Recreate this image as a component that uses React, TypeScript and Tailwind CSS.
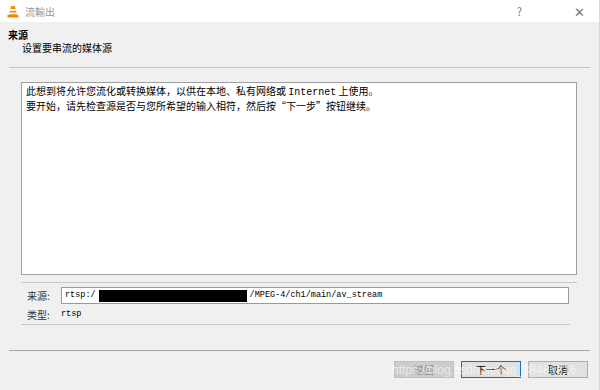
import React from "react";

function VlcIcon() {
  return (
    <svg width="12" height="13" viewBox="0 0 12 13">
      <path d="M4.2 1 L7.8 1 L10 10 L2 10 Z" fill="#f08a00" />
      <path d="M3.6 4 L8.4 4 L8.9 6 L3.1 6 Z" fill="#fff" />
      <path d="M2.6 7.6 L9.4 7.6 L9.8 9.3 L2.2 9.3 Z" fill="#fff" />
      <rect x="0.5" y="10" width="11" height="2.5" rx="0.6" fill="#f08a00" />
    </svg>
  );
}

export default function App() {
  const cjk = "font-['Microsoft_YaHei','Noto_Sans_CJK_SC',sans-serif]";
  const mono = "font-['Liberation_Mono','Noto_Sans_CJK_SC',monospace]";
  return (
    <div className={`relative flex h-[390px] w-[600px] flex-col overflow-hidden border-r border-[#d9d9d9] bg-[#f0f0f0] text-[10px] leading-[13px] text-black ${cjk}`}>
      {/* title bar */}
      <div className="flex h-[22px] shrink-0 items-center bg-white pl-[7px]">
        <VlcIcon />
        <span className="ml-[6px] text-[10px] text-[#999]">流輸出</span>
        <span className="ml-auto mr-[52px] text-[11px] text-[#777]">?</span>
        <span className="mr-[14px] text-[13px] font-light text-[#777]">✕</span>
      </div>

      {/* header */}
      <div className="flex flex-col pl-[8px] pt-[6px]">
        <span className="font-bold">来源</span>
        <span className="pl-[14px]">设置要串流的媒体源</span>
      </div>
      <div className="mx-[9px] mt-[13px] h-px bg-[#c4c4c4]" />

      {/* body */}
      <div className="ml-[21px] mr-[22px] mt-[14px] flex flex-col">
        <div className="h-[193px] border border-[#a0a0a0] bg-white px-[4px] pt-[1px]">
          <p>
            此想到将允许您流化或转换媒体，以供在本地、私有网络或 <span className={mono}>Internet</span> 上使用。
          </p>
          <p>要开始，请先检查源是否与您所希望的输入相符，然后按“下一步”按钮继续。</p>
        </div>
        <div className="mt-[7px] h-px bg-[#c8c8c8]" />
        <div className="mt-[4px] flex items-center pl-[6px] pr-[8px]">
          <span className="w-[34px] text-[#333]">来源:</span>
          <div className={`flex h-[17px] flex-1 items-center border border-[#9a9a9a] bg-white pl-[3px] text-[8.5px] ${mono}`}>
            <span>rtsp:/</span>
            <span className="mx-[3px] h-[12px] w-[148px] bg-black" />
            <span>/MPEG-4/ch1/main/av_stream</span>
          </div>
        </div>
        <div className="mt-[4px] flex items-center pl-[6px]">
          <span className="w-[34px] text-[#333]">类型:</span>
          <span className={`text-[8.5px] ${mono}`}>rtsp</span>
        </div>
        <div className="mr-[7px] mt-[3px] h-px bg-[#c8c8c8]" />
      </div>

      <div className="mx-[9px] mt-[25px] h-px bg-[#a8a8a8]" />

      {/* buttons */}
      <div className="mt-[10px] flex justify-end gap-[7px] pr-[11px]">
        <div className="flex h-[17px] w-[60px] items-center justify-center border border-[#bfbfbf] bg-[#cccccc] text-[#8a8a8a]">返回</div>
        <div className="flex h-[17px] w-[60px] items-center justify-center border border-[#0078d7] bg-[#e1e1e1]">下一个</div>
        <div className="flex h-[17px] w-[60px] items-center justify-center border border-[#adadad] bg-[#e1e1e1]">取消</div>
      </div>

      {/* watermark */}
      <span className="pointer-events-none absolute left-[392px] top-[364px] font-['Liberation_Sans',sans-serif] text-[12px] text-white/60">
        https://blog.csdn.net/qq_38486816
      </span>
    </div>
  );
}
